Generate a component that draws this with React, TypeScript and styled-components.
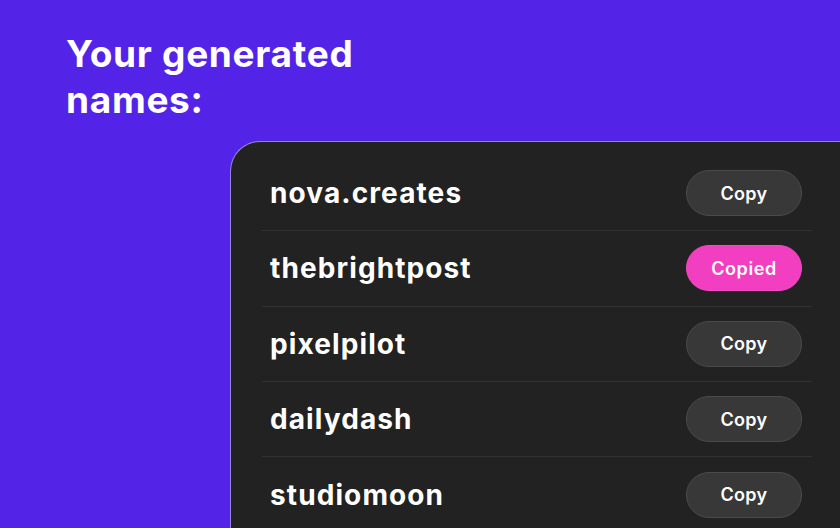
import React from "react";
import styled, { createGlobalStyle } from "styled-components";

const GlobalStyle = createGlobalStyle`
  html, body {
    margin: 0;
    padding: 0;
    background: #5423e8;
  }
  body {
    font-family: Inter, "Noto Sans", sans-serif;
    -webkit-font-smoothing: antialiased;
  }
`;

const Page = styled.div`
  width: 840px;
  height: 528px;
  overflow: hidden;
  background: #5423e8;
  display: flex;
  flex-direction: column;
`;

const Heading = styled.h1`
  margin: 31px 0 0 66px;
  color: #ffffff;
  font-size: 37px;
  font-weight: 700;
  line-height: 46px;
  letter-spacing: 0.7px;
`;

const Card = styled.div`
  margin: 18px 0 0 230px;
  flex: 1;
  background: #222222;
  border-top: 1px solid #9486dc;
  border-left: 1px solid #9486dc;
  border-top-left-radius: 30px;
  padding: 14px 28px 0 31px;
  display: flex;
  flex-direction: column;
`;

const Row = styled.div<{ $last?: boolean }>`
  box-sizing: border-box;
  height: 75.3px;
  flex-shrink: 0;
  display: flex;
  align-items: center;
  justify-content: space-between;
  padding: 0 10px 0 8px;
  border-bottom: ${({ $last }) => ($last ? "none" : "1px solid #333333")};
`;

const Name = styled.span`
  color: #ffffff;
  font-size: 28px;
  font-weight: 700;
  letter-spacing: 1.1px;
`;

const CopyButton = styled.button<{ $copied?: boolean }>`
  width: 116px;
  height: 46px;
  border-radius: 23px;
  border: 1px solid ${({ $copied }) => ($copied ? "#f54ac6" : "#4b4b4b")};
  background: ${({ $copied }) => ($copied ? "#f23ec0" : "#383838")};
  color: #ffffff;
  font-family: Inter, "Noto Sans", sans-serif;
  font-size: 18px;
  font-weight: 600;
  letter-spacing: ${({ $copied }) => ($copied ? "0.6px" : "0.3px")};
  cursor: pointer;
`;

const names = [
  { name: "nova.creates", copied: false },
  { name: "thebrightpost", copied: true },
  { name: "pixelpilot", copied: false },
  { name: "dailydash", copied: false },
  { name: "studiomoon", copied: false },
];

export default function App() {
  return (
    <>
      <GlobalStyle />
      <Page>
        <Heading>
          Your generated
          <br />
          names:
        </Heading>
        <Card>
          {names.map((n, i) => (
            <Row key={n.name} $last={i === names.length - 1}>
              <Name>{n.name}</Name>
              <CopyButton $copied={n.copied}>
                {n.copied ? "Copied" : "Copy"}
              </CopyButton>
            </Row>
          ))}
        </Card>
      </Page>
    </>
  );
}
